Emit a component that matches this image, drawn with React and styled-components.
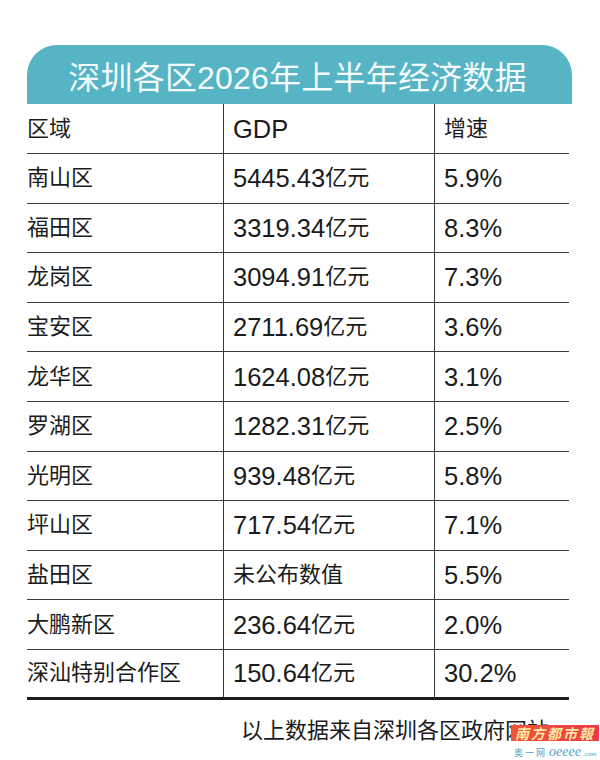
import React from "react";
import styled, { createGlobalStyle } from "styled-components";

const GlobalStyle = createGlobalStyle`
  body {
    margin: 0;
    background: #ffffff;
    font-family: "Liberation Sans", "Noto Sans CJK SC", sans-serif;
    color: #1b1b1b;
  }
`;

const Page = styled.div`
  padding: 45px 0 0 27px;
  width: 545px;
`;

const TitleBar = styled.div`
  height: 59px;
  background: #56b4c4;
  border-radius: 30px 30px 0 0;
  display: flex;
  align-items: center;
  justify-content: center;
  color: #f4fbfc;
  font-size: 32px;
  letter-spacing: 0.2px;
  padding-right: 4px;
`;

const Table = styled.div`
  width: 542px;
`;

const Row = styled.div`
  display: grid;
  grid-template-columns: 196px 211px 1fr;
  height: ${({ $h }) => $h}px;
  box-sizing: border-box;
  border-bottom: ${({ $last }) =>
    $last ? "3px solid #1b1b1b" : "1px solid #3a3a3a"};
`;

const Cell = styled.div`
  display: flex;
  align-items: center;
  padding-left: ${({ $first }) => ($first ? "0" : "9px")};
  border-left: ${({ $first }) => ($first ? "none" : "1px solid #3a3a3a")};
  font-size: 22px;
  line-height: 30px;
  white-space: nowrap;
`;

const Latin = styled.span`
  font-size: 25.5px;
`;

const Footer = styled.div`
  position: relative;
  margin-top: 16px;
  padding-left: 214px;
  height: 44px;
  font-size: 22px;
  line-height: 30px;
  white-space: nowrap;
`;

const Stamp = styled.div`
  position: absolute;
  left: 484px;
  top: 9px;
  width: 88px;
  height: 16px;
  background: linear-gradient(90deg, #f2553a, #ec3b47);
  display: flex;
  align-items: center;
  justify-content: center;
  color: #ffeaa6;
  font-family: "Noto Sans CJK TC", sans-serif;
  font-size: 14px;
  line-height: 16px;
  font-weight: 700;
  font-style: italic;
  letter-spacing: 2px;
`;

const Site = styled.div`
  position: absolute;
  left: 487px;
  top: 29px;
  width: 90px;
  height: 13px;
  display: flex;
  align-items: baseline;
  gap: 2px;
  color: #4f9fcb;
  line-height: 13px;
  white-space: nowrap;
`;

const SiteCn = styled.span`
  font-family: "Noto Sans CJK SC", sans-serif;
  font-size: 9px;
  letter-spacing: 2px;
`;

const SiteEn = styled.span`
  font-family: "Liberation Serif", serif;
  font-style: italic;
  font-size: ${({ $small }) => ($small ? "7px" : "14px")};
`;

const rows = [
  ["南山区", "5445.43亿元", "5.9%"],
  ["福田区", "3319.34亿元", "8.3%"],
  ["龙岗区", "3094.91亿元", "7.3%"],
  ["宝安区", "2711.69亿元", "3.6%"],
  ["龙华区", "1624.08亿元", "3.1%"],
  ["罗湖区", "1282.31亿元", "2.5%"],
  ["光明区", "939.48亿元", "5.8%"],
  ["坪山区", "717.54亿元", "7.1%"],
  ["盐田区", "未公布数值", "5.5%"],
  ["大鹏新区", "236.64亿元", "2.0%"],
  ["深汕特别合作区", "150.64亿元", "30.2%"],
];

// latin runs are set a bit larger than the CJK, as in the source
function Mixed({ text }) {
  return text
    .split(/([0-9A-Za-z.%]+)/)
    .filter(Boolean)
    .map((part, i) =>
      /^[0-9A-Za-z.%]+$/.test(part) ? <Latin key={i}>{part}</Latin> : part
    );
}

export default function App() {
  return (
    <>
      <GlobalStyle />
      <Page>
        <TitleBar>深圳各区2026年上半年经济数据</TitleBar>
        <Table>
          <Row $h={50}>
            <Cell $first>区域</Cell>
            <Cell>
              <Mixed text="GDP" />
            </Cell>
            <Cell>增速</Cell>
          </Row>
          {rows.map((r, i) => (
            <Row key={r[0]} $h={49.6} $last={i === rows.length - 1}>
              <Cell $first>{r[0]}</Cell>
              <Cell>
                <Mixed text={r[1]} />
              </Cell>
              <Cell>
                <Mixed text={r[2]} />
              </Cell>
            </Row>
          ))}
        </Table>
        <Footer>
          以上数据来自深圳各区政府网站
          <Stamp>南方都市報</Stamp>
          <Site>
            <SiteCn>奥一网</SiteCn>
            <SiteEn>oeeee</SiteEn>
            <SiteEn $small>.com</SiteEn>
          </Site>
        </Footer>
      </Page>
    </>
  );
}
